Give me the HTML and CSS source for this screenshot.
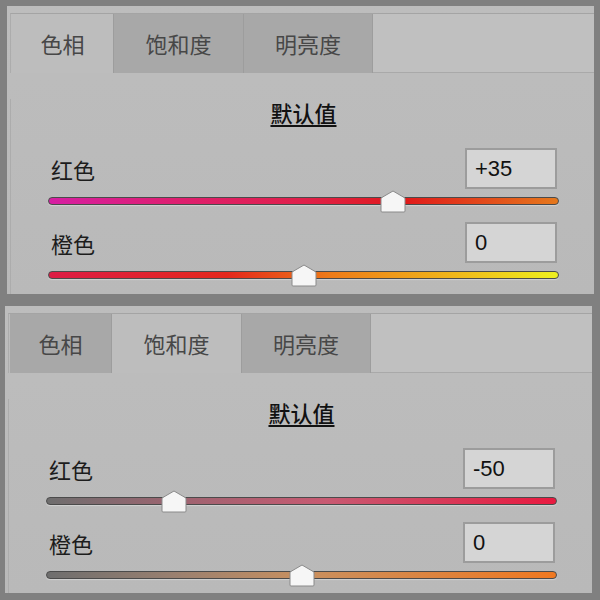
FILE: index.html
```html
<!DOCTYPE html>
<html lang="zh-CN">
<head>
    <meta charset="UTF-8">
    <title>色相 / 饱和度</title>
    <link rel="stylesheet" href="styles.css">
</head>
<body>
    <div class="panel">
        <div class="tabs">
            <div class="tab tab-first active">色相</div>
            <div class="tab tab-second">饱和度</div>
            <div class="tab tab-third">明亮度</div>
            <div class="tab-fill"></div>
        </div>
        <div class="content">
            <div class="reset">默认值</div>

            <div class="row">
                <div class="row-head">
                    <span class="label">红色</span>
                    <div class="value">+35</div>
                </div>
                <div class="track hue-red">
                    <svg class="thumb" style="left: 67.5%" width="26" height="23" viewBox="0 0 26 23"><path d="M13 1 L24.3 7.6 Q25 8 25 9 L25 21 Q25 22 24 22 L2 22 Q1 22 1 21 L1 9 Q1 8 1.7 7.6 Z" fill="#f6f6f6" stroke="#8a8a8a" stroke-width="1"/></svg>
                </div>
            </div>

            <div class="row">
                <div class="row-head">
                    <span class="label">橙色</span>
                    <div class="value">0</div>
                </div>
                <div class="track hue-orange">
                    <svg class="thumb" style="left: 50%" width="26" height="23" viewBox="0 0 26 23"><path d="M13 1 L24.3 7.6 Q25 8 25 9 L25 21 Q25 22 24 22 L2 22 Q1 22 1 21 L1 9 Q1 8 1.7 7.6 Z" fill="#f6f6f6" stroke="#8a8a8a" stroke-width="1"/></svg>
                </div>
            </div>

            <div class="peek"></div>
        </div>
    </div>

    <div class="panel panel-second">
        <div class="tabs">
            <div class="tab tab-first">色相</div>
            <div class="tab tab-second active">饱和度</div>
            <div class="tab tab-third">明亮度</div>
            <div class="tab-fill"></div>
        </div>
        <div class="content">
            <div class="reset">默认值</div>

            <div class="row">
                <div class="row-head">
                    <span class="label">红色</span>
                    <div class="value">-50</div>
                </div>
                <div class="track sat-red">
                    <svg class="thumb" style="left: 25%" width="26" height="23" viewBox="0 0 26 23"><path d="M13 1 L24.3 7.6 Q25 8 25 9 L25 21 Q25 22 24 22 L2 22 Q1 22 1 21 L1 9 Q1 8 1.7 7.6 Z" fill="#f6f6f6" stroke="#8a8a8a" stroke-width="1"/></svg>
                </div>
            </div>

            <div class="row">
                <div class="row-head">
                    <span class="label">橙色</span>
                    <div class="value">0</div>
                </div>
                <div class="track sat-orange">
                    <svg class="thumb" style="left: 50%" width="26" height="23" viewBox="0 0 26 23"><path d="M13 1 L24.3 7.6 Q25 8 25 9 L25 21 Q25 22 24 22 L2 22 Q1 22 1 21 L1 9 Q1 8 1.7 7.6 Z" fill="#f6f6f6" stroke="#8a8a8a" stroke-width="1"/></svg>
                </div>
            </div>
        </div>
    </div>
</body>
</html>
```

FILE: styles.css
```css
body {
    margin: 0;
    background-color: #808080;
    font-family: "Noto Sans CJK SC", "Liberation Sans", sans-serif;
    height: 600px;
    overflow: hidden;
}

.panel {
    margin: 6px 6px 0 7px;
    height: 281px;
    padding: 7px 0 0 3px;
    background: linear-gradient(180deg, #bdbdbd, #b9b9b9);
    overflow: hidden;
}

.panel-second {
    margin-top: 12px;
    margin-left: 5px;
    margin-right: 8px;
    height: 280px;
}

.tabs {
    display: flex;
    height: 59px;
    border-top: 1px solid #a4a4a4;
    border-left: 1px solid #acacac;
}

.tab {
    display: flex;
    align-items: center;
    justify-content: center;
    padding-bottom: 2px;
    background-color: #a8a8a8;
    color: #474747;
    font-size: 22px;
    border-right: 1px solid #9d9d9d;
}

.tab.active {
    background-color: #bdbdbd;
}

.tab-first {
    width: 101px;
    margin-left: 1px;
}

.tab-second {
    width: 129px;
}

.tab-third {
    width: 128px;
}

.tab-fill {
    flex: 1;
    background-color: #c0c0c0;
    border-bottom: 1px solid #a9a9a9;
}

.content {
    padding: 0 35px 0 37px;
    border-left: 1px solid #acacac;
    height: 100%;
}

.reset {
    margin-top: 26px;
    text-align: center;
    font-size: 22px;
    font-weight: 500;
    line-height: 26px;
    color: #111;
    text-decoration: underline;
    text-underline-offset: 3px;
}

.row {
    margin-top: 23px;
}

.row + .row {
    margin-top: 17px;
}

.row-head {
    display: flex;
    align-items: center;
    justify-content: space-between;
}

.label {
    padding-left: 3px;
    font-size: 22px;
    color: #1c1c1c;
}

.value {
    box-sizing: border-box;
    width: 92px;
    height: 41px;
    margin-right: 2px;
    padding-left: 8px;
    background-color: #d5d5d5;
    border: 2px solid #9c9c9c;
    font-family: "Liberation Sans", Arial, sans-serif;
    font-size: 22px;
    line-height: 37px;
    color: #111;
}

.peek {
    width: 92px;
    height: 10px;
    margin: 17px 2px 0 auto;
    background-color: #d5d5d5;
    border-top: 2px solid #9c9c9c;
}

.track {
    position: relative;
    height: 6px;
    margin-top: 8px;
    border: 1px solid #4b4b4b;
    border-radius: 4px;
    box-shadow: 0 1px 1px rgba(255, 255, 255, 0.35);
}

.thumb {
    position: absolute;
    top: -8px;
    transform: translateX(-50%);
}

.hue-red {
    background: linear-gradient(90deg, #d61fa3 0%, #de1f70 25%, #e0204a 50%, #e01a1a 70%, #e5781c 100%);
}

.hue-orange {
    background: linear-gradient(90deg, #dc1c45 0%, #e4281c 35%, #ee7a18 55%, #f0b81a 80%, #eef01e 100%);
}

.sat-red {
    background: linear-gradient(90deg, #6e6e6e 0%, #9c6470 25%, #c85a72 55%, #e81a40 100%);
}

.sat-orange {
    background: linear-gradient(90deg, #6e6e6e 0%, #9a8070 25%, #c89060 50%, #f07820 100%);
}
```
